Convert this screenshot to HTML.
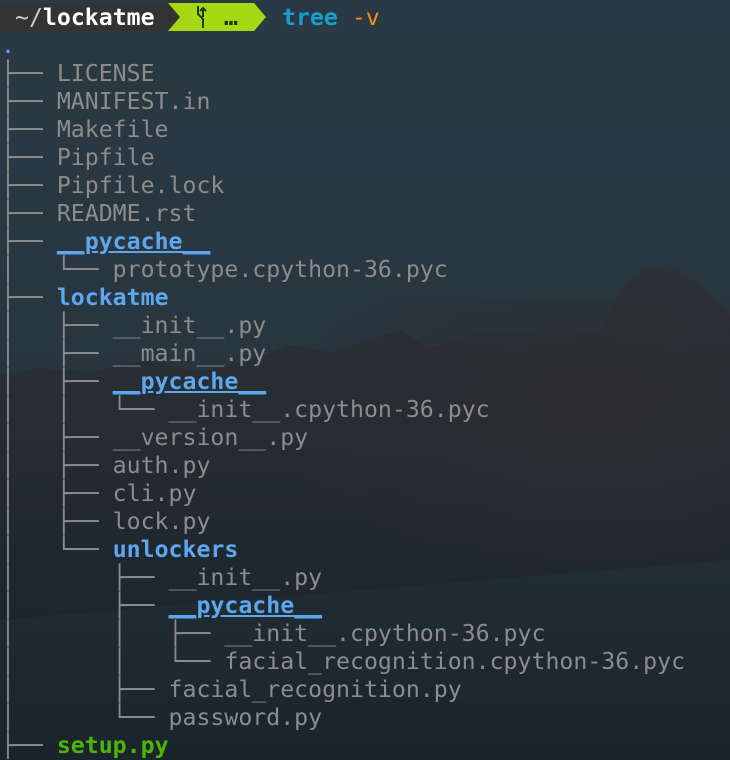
<!DOCTYPE html>
<html><head><meta charset="utf-8"><style>
html,body{margin:0;padding:0;width:730px;height:760px;overflow:hidden;background:#293741}
#bg{position:absolute;left:0;top:0}
pre,.pt{font-family:"DejaVu Sans Mono","Liberation Mono",monospace;font-size:23.2px;line-height:28px;white-space:pre}
pre{position:absolute;left:1px;top:4px;margin:0;color:#8c8c8c}
.pt{position:absolute;top:4px}
.d{color:#5ea6ee;font-weight:bold}
.g{color:#4cb50c;font-weight:bold}
.p1{position:absolute;left:0;top:3px;width:166px;height:28px;background:#333}
.p1a{position:absolute;left:166px;top:3px;width:0;height:0;border-top:14px solid transparent;border-bottom:14px solid transparent;border-left:14px solid #333}
.p2{position:absolute;left:168px;top:3px;width:86px;height:28px;background:#a8d714}
.p2a{position:absolute;left:254px;top:3px;width:0;height:0;border-top:14px solid transparent;border-bottom:14px solid transparent;border-left:12px solid #a8d714}
.p2n{position:absolute;left:168px;top:3px;border-top:14px solid transparent;border-bottom:14px solid transparent;border-left:12px solid #333}
</style></head><body>
<svg id="bg" width="730" height="760" viewBox="0 0 730 760">
<defs><linearGradient id="gr" x1="0" y1="0" x2="0" y2="1"><stop offset="0" stop-color="#2a3943"/><stop offset="0.45" stop-color="#283640"/><stop offset="1" stop-color="#1b242b"/></linearGradient>
<linearGradient id="m" x1="0" y1="0" x2="0" y2="1"><stop offset="0" stop-color="#2c3237"/><stop offset="1" stop-color="#1d262d"/></linearGradient>
<radialGradient id="h" cx="0.75" cy="0.35" r="0.6"><stop offset="0" stop-color="#2e2c2e" stop-opacity="0.8"/><stop offset="1" stop-color="#2e2c2e" stop-opacity="0"/></radialGradient></defs>
<rect width="730" height="760" fill="url(#gr)"/>
<path d="M0 375 L40 368 L90 372 L150 360 L200 372 L250 360 L290 345 L330 352 L375 338 L400 330 L430 348 L470 335 L520 332 L560 338 L600 330 L612 305 L625 285 L640 270 L670 265 L690 278 L710 295 L730 315 L730 560 L0 620 Z" fill="url(#m)"/>
<rect x="200" y="300" width="530" height="300" fill="url(#h)"/>
</svg>
<div class="p1"></div><div class="p1a"></div>
<div class="p2"></div><div class="p2n"></div><div class="p2a"></div>
<svg style="position:absolute;left:194px;top:5px" width="14" height="24" viewBox="0 0 14 24"><path d="M4 1 V9 L9 14 V23 M9 4 V12" stroke="#1d3a05" stroke-width="2" fill="none"/><path d="M6 6 L9 3 L12 6" stroke="#1d3a05" stroke-width="2" fill="none"/></svg>
<div class="pt" style="left:15px;color:#ccc">~/<b style="color:#fff">lockatme</b></div>
<div class="pt" style="left:224px;color:#1d3a05;font-weight:bold">…</div>
<div class="pt" style="left:282px"><b style="color:#14a0d2">tree</b> <span style="color:#f0921c">-v</span></div>
<pre> 
<span style="color:#5ea6ee">.</span>
├── LICENSE
├── MANIFEST.in
├── Makefile
├── Pipfile
├── Pipfile.lock
├── README.rst
├── <span class="d"><u>__pycache__</u></span>
│   └── prototype.cpython-36.pyc
├── <span class="d">lockatme</span>
│   ├── __init__.py
│   ├── __main__.py
│   ├── <span class="d"><u>__pycache__</u></span>
│   │   └── __init__.cpython-36.pyc
│   ├── __version__.py
│   ├── auth.py
│   ├── cli.py
│   ├── lock.py
│   └── <span class="d">unlockers</span>
│       ├── __init__.py
│       ├── <span class="d"><u>__pycache__</u></span>
│       │   ├── __init__.cpython-36.pyc
│       │   └── facial_recognition.cpython-36.pyc
│       ├── facial_recognition.py
│       └── password.py
├── <span class="g">setup.py</span></pre>
</body></html>
